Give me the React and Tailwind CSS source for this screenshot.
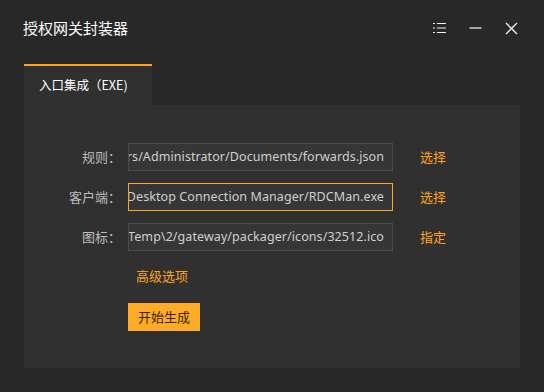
const font = { fontFamily: '"Noto Sans CJK SC", "Noto Sans", sans-serif' };

function ListIcon() {
  return (
    <svg width="13" height="12" viewBox="0 0 13 12" fill="none" stroke="#ededed" strokeWidth="1.2">
      <path d="M0 1.5h2M0 6h2M0 10.5h2M4 1.5h9M4 6h9M4 10.5h9" />
    </svg>
  );
}

function MinusIcon() {
  return (
    <svg width="13" height="12" viewBox="0 0 13 12" fill="none" stroke="#ededed" strokeWidth="1.3">
      <path d="M0.5 6h12" />
    </svg>
  );
}

function CloseIcon() {
  return (
    <svg width="13" height="13" viewBox="0 0 13 13" fill="none" stroke="#ededed" strokeWidth="1.4">
      <path d="M1 1l11 11M12 1L1 12" />
    </svg>
  );
}

function Row({ label, value, action, active }) {
  return (
    <div className="flex items-center h-[28px]">
      <div className="w-[97px] text-right text-[13px] text-[#bdbdbd] whitespace-nowrap">{label}</div>
      <div
        className={`ml-[7px] w-[265px] h-[28px] flex items-center justify-end overflow-hidden whitespace-nowrap bg-[#363636] border px-[8px] text-[12.5px] text-[#cfcfcf] tracking-[0.08px] ${
          active ? "border-[#ffa41c]" : "border-[#4a4a4a]"
        }`}
        style={{ fontFamily: '"Noto Sans", sans-serif' }}
      >
        <span className="shrink-0">{value}</span>
      </div>
      <div className="ml-[27px] text-[13px] text-[#ffa41c]">{action}</div>
    </div>
  );
}

export default function App() {
  return (
    <div className="w-[544px] h-[392px] bg-[#282828] overflow-hidden" style={font}>
      {/* title bar */}
      <div className="h-[56px] flex items-center pl-[23px] pr-[26px]">
        <div className="text-[15px] text-white">授权网关封装器</div>
        <div className="ml-auto flex items-center gap-[23px]">
          <ListIcon />
          <MinusIcon />
          <CloseIcon />
        </div>
      </div>

      {/* tabs */}
      <div className="mt-[8px] ml-[24px] flex">
        <div className="w-[128px] h-[41px] border-t-2 border-[#ffa41c] bg-[#303030] flex items-center pl-[15px] text-[12.5px] text-white">
          入口集成（EXE)
        </div>
      </div>

      {/* panel */}
      <div className="ml-[24px] w-[496px] h-[263px] bg-[#303030] pt-[38px]">
        <div className="flex flex-col gap-[12px]">
          <Row label="规则：" value="C:/Users/Administrator/Documents/forwards.json" action="选择" />
          <Row label="客户端：" value="C:/Program Files/Remote Desktop Connection Manager/RDCMan.exe" action="选择" active />
          <Row label="图标：" value="C:/Users/Administrator/AppData/Local/Temp\2/gateway/packager/icons/32512.ico" action="指定" />
        </div>
        <div className="ml-[112px] mt-[15px] text-[13px] text-[#ffa41c]">高级选项</div>
        <button className="ml-[104px] mt-[17px] w-[72px] h-[28px] bg-[#ffab25] text-[13px] text-[#3a2600] flex items-center justify-center">
          开始生成
        </button>
      </div>
    </div>
  );
}
